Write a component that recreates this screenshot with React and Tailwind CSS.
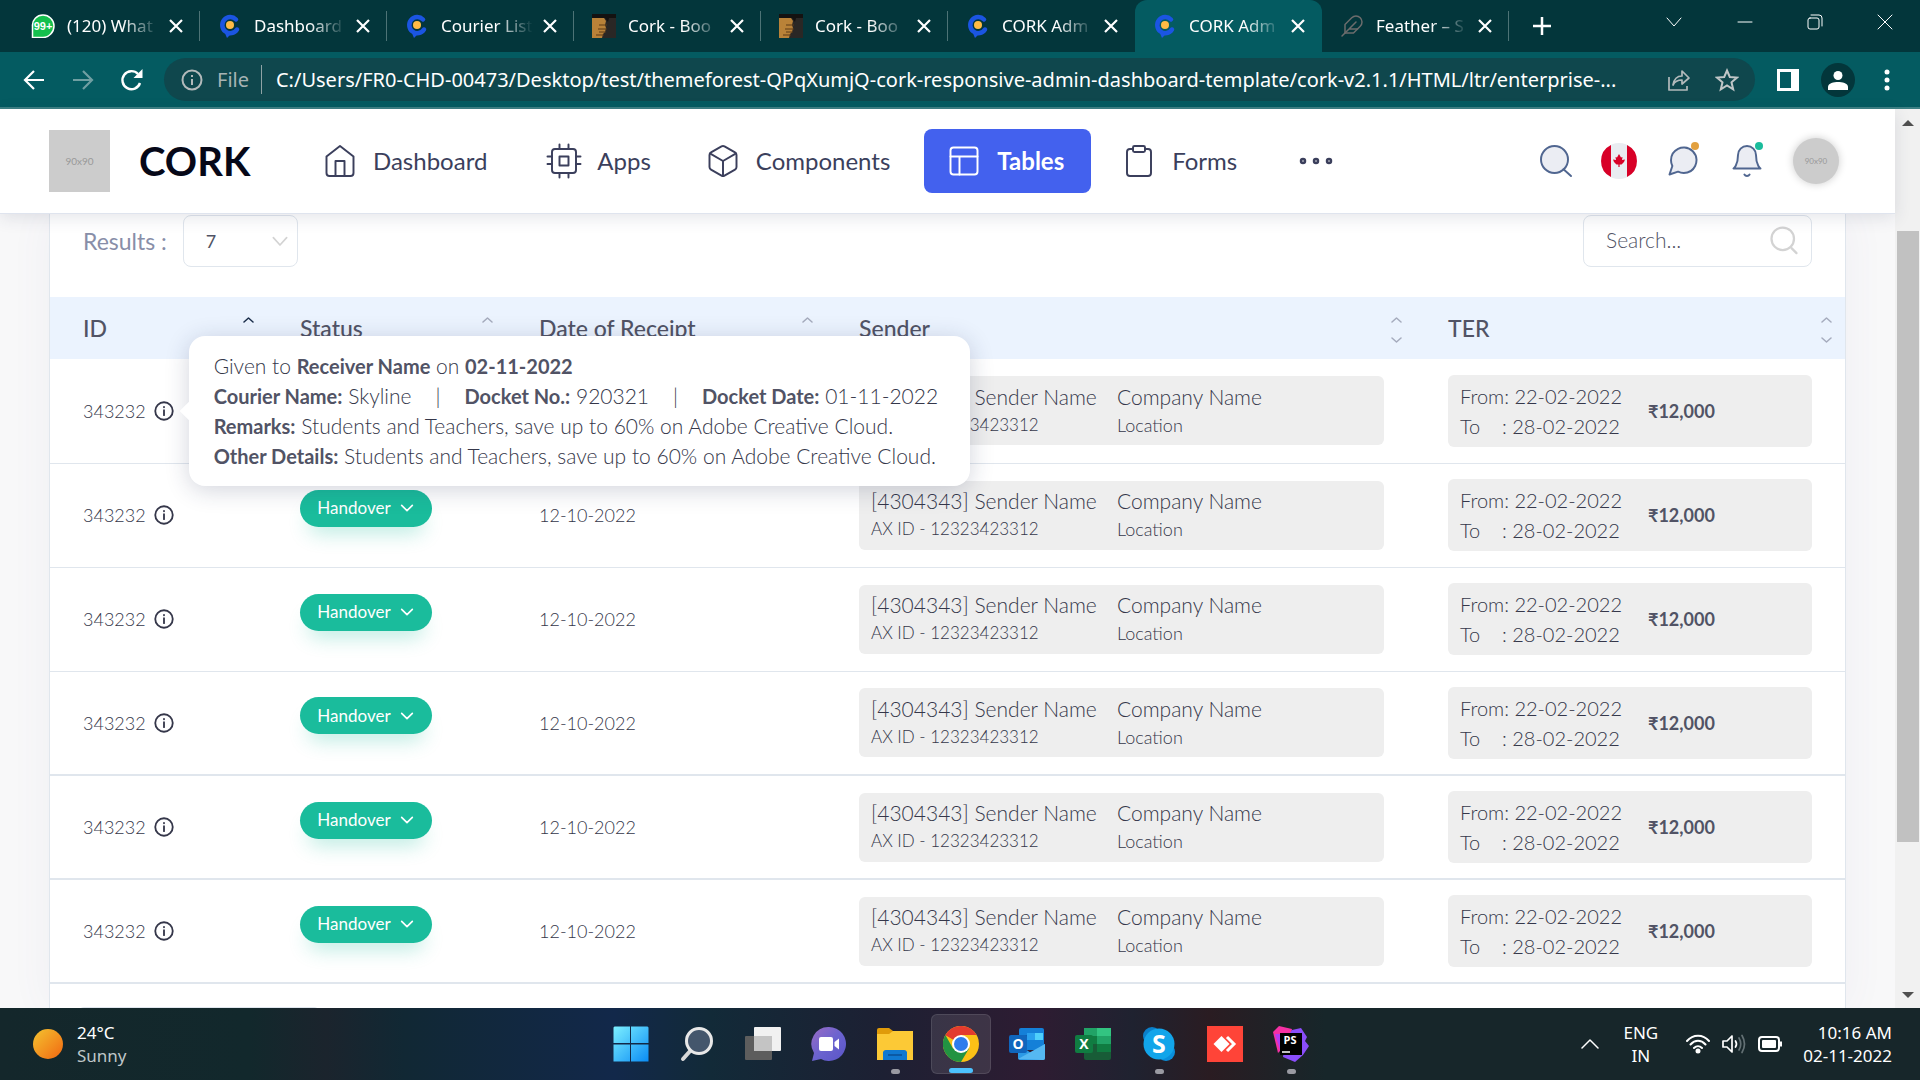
import React from "react";

const stroke = { fill: "none", stroke: "currentColor", strokeLinecap: "round", strokeLinejoin: "round" };

function Icon({ className, width = 1.5, children, fill }) {
  return (
    <svg viewBox="0 0 24 24" className={className} {...stroke} fill={fill || "none"} strokeWidth={width} aria-hidden="true">
      {children}
    </svg>
  );
}

/* ---------- favicons ---------- */

function WhatsAppFavicon() {
  return (
    <svg viewBox="0 0 24 24" className="size-6 shrink-0" aria-hidden="true">
      <path d="M12 1C18 1 23 5.800 23 12S18 23.500 12 23.500H1.500V12C1 5.800 6 1 12 1Z" fill="#14c04d" stroke="#fff" strokeWidth="1.500" />
      <text x="12" y="16" textAnchor="middle" fontSize="11" fontWeight="700" fill="#fff" fontFamily="Liberation Sans, sans-serif">99+</text>
    </svg>
  );
}

function CorkFavicon() {
  return (
    <svg viewBox="0 0 24 24" className="size-6 shrink-0" aria-hidden="true">
      <path d="M18 5.500A8 8 0 1 0 19 15.500" fill="none" stroke="#1b55e2" strokeWidth="4.500" strokeLinecap="round" />
      <path d="M6 17L9 24L15 18Z" fill="#1b55e2" />
      <circle cx="12" cy="11" r="4" fill="#ffbb44" />
    </svg>
  );
}

function EnvatoFavicon() {
  return (
    <svg viewBox="0 0 24 24" className="size-6 shrink-0" aria-hidden="true">
      <rect width="24" height="24" fill="#2a2725" />
      <path d="M0 4L12 4L14 7L13 11L14 14L13 18L11 20L10 24H0Z" fill="#b98238" />
      <path d="M7 11H15M6 15H15M7 18H14M4 21H12" stroke="#5c3a17" strokeWidth="1" />
      <path d="M0 0H24V4H17L16 8L13 4H0Z" fill="#141211" />
    </svg>
  );
}

function FeatherFavicon() {
  return (
    <Icon className="size-6 shrink-0 text-[#6c6c6c]">
      <path d="M20.240 12.240a6 6 0 0 0-8.490-8.490L5 10.500V19h8.500z" />
      <path d="M16 8L2 22M17.500 15H9" />
    </Icon>
  );
}

const TABS = [
  { title: "(120) What", icon: WhatsAppFavicon },
  { title: "Dashboard", icon: CorkFavicon },
  { title: "Courier List", icon: CorkFavicon },
  { title: "Cork - Boo", icon: EnvatoFavicon },
  { title: "Cork - Boo", icon: EnvatoFavicon },
  { title: "CORK Adm", icon: CorkFavicon, beforeActive: true },
  { title: "CORK Adm", icon: CorkFavicon, active: true },
  { title: "Feather – S", icon: FeatherFavicon },
];

function Tab({ title, icon: Fav, active, beforeActive }) {
  return (
    <div className={active ? "relative flex h-full w-[187px] items-center rounded-t-xl bg-[#045b61] pl-[18px]" : "relative flex h-full w-[187px] items-center pl-[18px]"}>
      <Fav />
      <span className="ml-3 w-[92px] overflow-hidden text-[17px] leading-6 whitespace-nowrap text-white [mask-image:linear-gradient(to_right,black_60%,transparent)]">
        {title}
      </span>
      <button aria-label="Close tab" className="ml-[9px] text-white">
        <svg viewBox="0 0 16 16" className="size-4" aria-hidden="true">
          <path d="M2 2L14 14M14 2L2 14" stroke="currentColor" strokeWidth="2.200" />
        </svg>
      </button>
      {!active && !beforeActive && <span className="absolute right-0 h-[30px] w-px bg-[#4d7376]" />}
    </div>
  );
}

function WindowButtons() {
  return (
    <div className="ml-auto flex items-center pb-2 text-white">
      <button aria-label="Search tabs" className="flex w-[72px] justify-center">
        <svg viewBox="0 0 16 10" className="h-[10px] w-4" {...stroke}><path d="M1 1L8 9L15 1" /></svg>
      </button>
      <button aria-label="Minimize" className="flex w-[70px] justify-center">
        <svg viewBox="0 0 16 16" className="size-4" {...stroke}><path d="M1 8H15" /></svg>
      </button>
      <button aria-label="Restore" className="flex w-[70px] justify-center">
        <svg viewBox="0 0 16 16" className="size-4" {...stroke}><rect x="1" y="4" width="11" height="11" rx="2" /><path d="M4 1H12A3 3 0 0 1 15 4V12" /></svg>
      </button>
      <button aria-label="Close window" className="flex w-[70px] justify-center">
        <svg viewBox="0 0 16 16" className="size-4" {...stroke}><path d="M1 1L15 15M15 1L1 15" /></svg>
      </button>
    </div>
  );
}

function BrowserChrome() {
  return (
    <div className="shrink-0 font-['Noto_Sans','Open_Sans',sans-serif]">
      <div className="flex h-[52px] bg-[#03363b] pl-[13px]">
        {TABS.map((t, i) => <Tab key={i} {...t} />)}
        <button aria-label="New tab" className="ml-6 text-white">
          <svg viewBox="0 0 18 18" className="size-[18px]"><path d="M9 0V18M0 9H18" stroke="currentColor" strokeWidth="2.500" /></svg>
        </button>
        <WindowButtons />
      </div>
      <div className="flex h-[57px] items-center border-b-2 border-[#3d8084] bg-[#045b61] pl-[22px] text-white">
        <button aria-label="Back">
          <svg viewBox="0 0 24 24" className="size-6" fill="none" stroke="currentColor" strokeWidth="2.200"><path d="M22 12H3M12 3L3 12L12 21" /></svg>
        </button>
        <button aria-label="Forward" className="ml-[25px] text-[#6f9fa2]">
          <svg viewBox="0 0 24 24" className="size-6" fill="none" stroke="currentColor" strokeWidth="2.200"><path d="M2 12H21M12 3L21 12L12 21" /></svg>
        </button>
        <button aria-label="Reload" className="ml-[25px]">
          <svg viewBox="0 0 24 24" className="size-6"><path d="M20 15A9 9 0 1 1 18 6" fill="none" stroke="currentColor" strokeWidth="2.400" /><path d="M22.500 1V10H13.500Z" fill="currentColor" /></svg>
        </button>
        <div className="ml-5 flex h-[43px] min-w-0 flex-1 items-center rounded-full bg-[#0f474d] pl-[17px] text-xl">
          <svg viewBox="0 0 22 22" className="size-[22px] shrink-0 text-[#b3babb]" fill="none" stroke="currentColor" strokeWidth="2"><circle cx="11" cy="11" r="9.500" /><path d="M11 10V16M11 6V8" /></svg>
          <span className="ml-[14px] text-[#a7b3b4]">File</span>
          <span className="ml-3 h-[29px] w-px bg-[#8fa3a5]" />
          <input aria-label="Address" readOnly className="ml-[14px] min-w-0 flex-1 bg-transparent text-ellipsis outline-none" defaultValue="C:/Users/FR0-CHD-00473/Desktop/test/themeforest-QPqXumjQ-cork-responsive-admin-dashboard-template/cork-v2.1.1/HTML/ltr/enterprise-..." />
          <button aria-label="Share" className="ml-2 text-[#b3babb]">
            <svg viewBox="0 0 24 24" className="size-6" fill="none" stroke="currentColor" strokeWidth="1.700" strokeLinejoin="round"><path d="M2 9V22H20V18M6 17C7 11 10 8 15 8V3L22 10L15 16V12C11 12 8 13 6 17Z" /></svg>
          </button>
          <button aria-label="Bookmark" className="mr-4 ml-6 text-[#c0c6c7]">
            <svg viewBox="0 0 24 24" className="size-6" fill="none" stroke="currentColor" strokeWidth="2"><path d="M12 2.500L14.800 9L22 9.600L16.500 14.300L18.200 21.300L12 17.500L5.800 21.300L7.500 14.300L2 9.600L9.200 9Z" /></svg>
          </button>
        </div>
        <button aria-label="Side panel" className="ml-[22px]">
          <svg viewBox="0 0 22 22" className="size-[22px]"><path d="M0 0H22V22H0ZM3 3V19H14V3Z" fill="currentColor" fillRule="evenodd" /></svg>
        </button>
        <button aria-label="Profile" className="ml-[22px] flex size-[34px] items-center justify-center rounded-full bg-[#03363b]">
          <svg viewBox="0 0 20 20" className="size-5" fill="currentColor"><circle cx="10" cy="5.500" r="4.500" /><path d="M0 20V17C0 13 6 12 10 12S20 13 20 17V20Z" /></svg>
        </button>
        <button aria-label="Menu" className="mr-[30px] ml-[29px]">
          <svg viewBox="0 0 6 22" className="h-[22px] w-[6px]" fill="currentColor"><circle cx="3" cy="3" r="2.500" /><circle cx="3" cy="11" r="2.500" /><circle cx="3" cy="19" r="2.500" /></svg>
        </button>
      </div>
    </div>
  );
}

/* ---------- application header ---------- */

const NAV = [
  { label: "Dashboard", path: <><path d="M3 9l9-7 9 7v11a2 2 0 0 1-2 2H5a2 2 0 0 1-2-2z" /><path d="M9 22V12H15V22" /></>, cls: "ml-[65px]" },
  { label: "Apps", path: <><rect x="4" y="4" width="16" height="16" rx="2" /><rect x="9" y="9" width="6" height="6" /><path d="M9 1V4M15 1V4M9 20V23M15 20V23M20 9H23M20 14H23M1 9H4M1 14H4" /></>, cls: "ml-[59px]" },
  { label: "Components", path: <><path d="M21 16V8a2 2 0 0 0-1-1.730l-7-4a2 2 0 0 0-2 0l-7 4A2 2 0 0 0 3 8v8a2 2 0 0 0 1 1.730l7 4a2 2 0 0 0 2 0l7-4A2 2 0 0 0 21 16z" /><path d="M3.270 6.960L12 12.010L20.730 6.960M12 22.080V12" /></>, cls: "ml-[54px]" },
  { label: "Tables", path: <><rect x="3" y="3" width="18" height="18" rx="2" /><path d="M3 9H21M9 21V9" /></>, active: true },
  { label: "Forms", path: <><path d="M16 4h2a2 2 0 0 1 2 2v14a2 2 0 0 1-2 2H6a2 2 0 0 1-2-2V6a2 2 0 0 1 2-2h2" /><rect x="8" y="2" width="8" height="4" rx="1" /></>, cls: "ml-[30px]" },
];

function CanadaFlag() {
  return (
    <svg viewBox="0 0 36 36" className="size-9" aria-hidden="true">
      <circle cx="18" cy="18" r="18" fill="#e9ecf1" />
      <path d="M10 1.900A18 18 0 0 0 10 34.100ZM26 1.900A18 18 0 0 1 26 34.100Z" fill="#d80027" />
      <path d="M18 11L20 14.500L21.500 14L21 17L24 16.500L23 19L20.500 21.500H18.600V24H17.400V21.500H15.500L13 19L12 16.500L15 17L14.500 14L16 14.500Z" fill="#d80027" />
    </svg>
  );
}

function AppHeader() {
  return (
    <header className="relative z-30 flex h-[105px] shrink-0 items-center border-b border-[#dfe4ee] bg-white pr-14 pl-[49px] text-[#3b3f5c] shadow-[0_4px_16px_rgba(40,50,80,0.12)]">
      <div className="flex h-[62px] w-[61px] items-center justify-center bg-[#cccccc] text-[10px] text-[#999]">90x90</div>
      <a href="#" className="ml-[29px] w-[118px] text-[40px] leading-none font-bold text-[#060818]">CORK</a>
      <nav className="flex items-center text-2xl">
        {NAV.map((n) => (
          <a
            key={n.label}
            href="#"
            className={n.active
              ? "ml-[34px] flex h-16 items-center rounded-lg bg-[#4361ee] pr-[27px] pl-[22px] font-bold text-white"
              : `flex items-center ${n.cls}`}
          >
            <Icon className="size-9" width={1.3}>{n.path}</Icon>
            <span className="ml-[15px]">{n.label}</span>
          </a>
        ))}
        <button aria-label="More" className="ml-[61px]">
          <svg viewBox="0 0 36 10" className="h-[10px] w-9" fill="none" stroke="currentColor" strokeWidth="2.500"><circle cx="5" cy="5" r="2" /><circle cx="18" cy="5" r="2" /><circle cx="31" cy="5" r="2" /></svg>
        </button>
      </nav>
      <div className="ml-auto flex items-center text-[#506690]">
        <button aria-label="Search">
          <Icon className="size-9" fill="#ebedf3" width={1.3}><circle cx="11" cy="11" r="9" /><path d="M17 17.500L22 22" /></Icon>
        </button>
        <button aria-label="Language" className="ml-[27px]"><CanadaFlag /></button>
        <button aria-label="Messages" className="relative ml-7">
          <Icon className="size-9" fill="#ebedf3" width={1.3}><path d="M21 11.500a8.380 8.380 0 0 1-.9 3.800 8.500 8.500 0 0 1-7.600 4.700 8.380 8.380 0 0 1-3.800-.9L3 21l1.900-5.700a8.380 8.380 0 0 1-.9-3.800 8.500 8.500 0 0 1 4.700-7.600 8.380 8.380 0 0 1 3.800-.9h.5a8.480 8.480 0 0 1 8 8v.5z" /></Icon>
          <span className="absolute -top-px right-[2px] size-2 rounded-full bg-[#e2a03f]" />
        </button>
        <button aria-label="Notifications" className="relative ml-7">
          <Icon className="size-9" fill="#ebedf3" width={1.3}><path d="M18 8A6 6 0 0 0 6 8c0 7-3 9-3 9h18s-3-2-3-9" /><path d="M13.730 21a2 2 0 0 1-3.460 0" /></Icon>
          <span className="absolute -top-px right-[2px] size-2 rounded-full bg-[#1abc9c]" />
        </button>
        <button aria-label="Account" className="ml-7 flex size-[46px] items-center justify-center rounded-full bg-[#cccccc] text-[8px] text-[#999] shadow-[0_0_8px_rgba(0,0,0,0.2)]">90x90</button>
      </div>
    </header>
  );
}

/* ---------- table ---------- */

function Sort({ up }) {
  return (
    <span className="absolute top-5 right-[13px] flex flex-col gap-[14px] text-[#a5abbd]">
      <svg viewBox="0 0 11 6" className={up ? "h-[6px] w-[11px] text-[#1b2e4b]" : "h-[6px] w-[11px]"} {...stroke} strokeWidth="1.500"><path d="M1 5L5.500 1L10 5" /></svg>
      <svg viewBox="0 0 11 6" className="h-[6px] w-[11px]" {...stroke} strokeWidth="1.500"><path d="M1 1L5.500 5L10 1" /></svg>
    </span>
  );
}

function Strong({ children }) {
  return <b className="text-xl leading-[30px] font-bold text-[#515365]">{children}</b>;
}

function Tooltip() {
  return (
    <div role="tooltip" className="absolute top-1/2 left-full z-20 ml-[15px] w-[781px] -translate-y-1/2 rounded-2xl bg-white px-[25px] py-[15px] text-[21px] leading-[30px] font-light whitespace-nowrap shadow-[0_4px_24px_rgba(30,40,80,0.2)]">
      <span className="absolute top-1/2 -left-[6px] size-4 -translate-y-1/2 rotate-45 bg-white" />
      <p>Given to <Strong>Receiver Name</Strong> on <Strong>02-11-2022</Strong></p>
      <p className="flex">
        <span><Strong>Courier Name:</Strong> Skyline</span>
        <span className="w-[53px] text-center">|</span>
        <span><Strong>Docket No.:</Strong> 920321</span>
        <span className="w-[53px] text-center">|</span>
        <span><Strong>Docket Date:</Strong> 01-11-2022</span>
      </p>
      <p><Strong>Remarks:</Strong> Students and Teachers, save up to 60% on Adobe Creative Cloud.</p>
      <p><Strong>Other Details:</Strong> Students and Teachers, save up to 60% on Adobe Creative Cloud.</p>
    </div>
  );
}

function Row({ first, heavy }) {
  return (
    <tr className={heavy ? "h-[104px] border-b-2 border-[#e0e6ed]" : "h-[104px] border-b border-[#e0e6ed]"}>
      <td className="pl-[33px]">
        <div className="flex items-center">
          <span className="text-lg">343232</span>
          <span className="relative ml-2 flex">
            <button aria-label="Details">
              <Icon className="size-5" width={2.2}><circle cx="12" cy="12" r="10.500" /><path d="M12 11V17M12 7V7.500" /></Icon>
            </button>
            {first && <Tooltip />}
          </span>
        </div>
      </td>
      <td className="pb-[14px] pl-[33px]">
        <button className="flex h-[37px] w-[132px] items-center justify-center gap-2 rounded-full bg-[#1abc9c] text-[17px] font-normal text-white shadow-[0_14px_20px_-8px_rgba(26,188,156,0.3)]">
          Handover
          <Icon className="size-4" width={2.5}><path d="M4 8L12 16L20 8" /></Icon>
        </button>
      </td>
      <td className="pl-[33px] text-lg">12-10-2022</td>
      <td className="pr-[31px] pl-[33px]">
        <div className="grid h-[69px] grid-cols-[246px_1fr] content-center rounded-md bg-[#eeeeee] px-3 leading-7">
          <span className="text-[21px]">[4304343] Sender Name</span>
          <span className="text-[21px]">Company Name</span>
          <span className="text-[17px]">AX ID - 12323423312</span>
          <span className="text-lg leading-7">Location</span>
        </div>
      </td>
      <td className="px-[33px]">
        <div className="flex h-[72px] items-center rounded-md bg-[#eeeeee] pl-3 text-xl leading-[30px]">
          <div className="w-[188px]">
            <p>From: 22-02-2022</p>
            <p className="whitespace-pre">{"To    : 28-02-2022"}</p>
          </div>
          <b className="text-lg font-bold text-[#515365]">₹12,000</b>
        </div>
      </td>
    </tr>
  );
}

const COLUMNS = [
  { label: "ID", cls: "w-[217px]", up: true },
  { label: "Status", cls: "w-[239px]" },
  { label: "Date of Receipt", cls: "w-[320px]" },
  { label: "Sender", cls: "" },
  { label: "TER", cls: "w-[430px]" },
];

function Page() {
  return (
    <main className="min-h-0 flex-1 overflow-hidden bg-[#f8f8f9] pr-[49px] pl-[49px] text-[#515365]">
      <div className="h-full border-x border-[#e0e6ed] bg-white shadow-[0_0_40px_rgba(94,92,154,0.06)]">
        <div className="flex h-[83px] items-start justify-between px-[33px] pt-px">
          <label className="flex items-center text-[23px] text-[#888ea8]">
            Results :
            <span className="relative ml-4">
              <select defaultValue="7" className="h-[52px] w-[115px] appearance-none rounded-lg border border-[#e0e6ed] bg-white pl-[22px] text-lg text-[#515365]">
                <option>7</option>
              </select>
              <Icon className="pointer-events-none absolute top-[18px] right-[10px] size-4 text-[#d3d3d3]" width={2.5}><path d="M2 7L12 18L22 7" /></Icon>
            </span>
          </label>
          <label className="relative">
            <input aria-label="Search" placeholder="Search..." className="h-[52px] w-[229px] rounded-lg border border-[#e0e6ed] pb-1 pl-[22px] text-[21px] placeholder:font-light placeholder:text-[#515365]" />
            <Icon className="absolute top-[10px] right-[13px] size-[30px] text-[#d3d3d3]" width={1.8}><circle cx="11" cy="11" r="9" /><path d="M18 18.500L22 22.500" /></Icon>
          </label>
        </div>
        <table className="w-full table-fixed border-collapse text-left">
          <thead className="bg-[#ebf3fe]">
            <tr className="h-[62px]">
              {COLUMNS.map((c) => (
                <th key={c.label} className={`relative pl-[33px] text-[23px] font-medium ${c.cls}`}>
                  {c.label}
                  <Sort up={c.up} />
                </th>
              ))}
            </tr>
          </thead>
          <tbody className="font-light text-[#35374a]">
            {[0, 1, 2, 3, 4, 5].map((i) => <Row key={i} first={i === 0} heavy={i > 2} />)}
          </tbody>
        </table>
        <div className="mt-[23px] ml-7 h-12 w-[242px] rounded-md border border-[#e0e6ed]" />
      </div>
    </main>
  );
}

function Scrollbar() {
  return (
    <div className="flex w-[25px] shrink-0 flex-col items-center bg-[#f1f1f1] text-[#505050]">
      <svg viewBox="0 0 12 6" className="mt-[11px] h-[6px] w-3" fill="currentColor"><path d="M0 6L6 0L12 6Z" /></svg>
      <div className="mt-[105px] h-[611px] w-[22px] bg-[#c1c1c1]" />
      <svg viewBox="0 0 12 6" className="mt-auto mb-[10px] h-[6px] w-3" fill="currentColor"><path d="M0 0L6 6L12 0Z" /></svg>
    </div>
  );
}

/* ---------- taskbar ---------- */

const APPS = [
  { name: "Start", art: <><defs><linearGradient id="win" x1="0" y1="0" x2="1" y2="1"><stop offset="0" stopColor="#7df0ff" /><stop offset="1" stopColor="#0a8cf5" /></linearGradient></defs><path d="M1.500 .5H17V17H.5V1.500ZM18 .5H34.500L35.500 1.500V17H18ZM.5 18.500H17V35.500H.5ZM18 18.500H35.500V35.500H18Z" fill="url(#win)" /></> },
  { name: "Search", art: <><path d="M4 33L12 24" stroke="#d8d8d8" strokeWidth="4" strokeLinecap="round" /><circle cx="20" cy="15" r="12.500" fill="#44566c" stroke="#e8e8e8" strokeWidth="3" /></> },
  { name: "Task view", art: <><rect x="0" y="10" width="27" height="24" rx="1" fill="#5d5d5d" /><rect x="9" y="1" width="27" height="24" rx="1" fill="#f1f1f1" /><rect x="9" y="10" width="18" height="15" fill="#c4c4c4" /></> },
  { name: "Chat", art: <><defs><linearGradient id="chat" x1="0" y1="0" x2="1" y2="1"><stop offset="0" stopColor="#9a6bc4" /><stop offset=".5" stopColor="#6b63cf" /><stop offset="1" stopColor="#5a55c8" /></linearGradient></defs><path d="M18 1A17 17 0 1 1 10 33L1 35L3 27A17 17 0 0 1 18 1Z" fill="url(#chat)" /><rect x="8" y="11" width="14" height="14" rx="2" fill="#fff" /><path d="M23.500 16L28 12.500V23.500L23.500 20Z" fill="#fff" /></> },
  { name: "Explorer", mark: "w-[9px] bg-[#9a9aa2]", art: <><path d="M0 4A2 2 0 0 1 2 2H12L16 5V9H0Z" fill="#e09b0a" /><path d="M0 8H12L16 5H36V34H0Z" fill="#fcc936" /><path d="M6 34V26A3 3 0 0 1 9 24H27A3 3 0 0 1 30 26V34Z" fill="#1078d0" /><path d="M11 29H25" stroke="#0a4f96" strokeWidth="1.500" /></> },
  { name: "Chrome", active: true, mark: "w-6 bg-[#4cc2ff]", art: <><circle cx="18" cy="18" r="18" fill="#fbc116" /><path d="M18 18L2.400 9A18 18 0 0 1 33.600 9H18Z" fill="#e33b2e" /><path d="M2.400 9A18 18 0 0 0 18 36L26 22.500L10 22.500Z" fill="#229342" /><path d="M10.200 13.500L2.400 9L18 9Z" fill="#e33b2e" /><circle cx="18" cy="18" r="9" fill="#fff" /><circle cx="18" cy="18" r="7" fill="#2f7cec" /></> },
  { name: "Outlook", art: <><rect x="10" y="2" width="25" height="22" rx="2" fill="#1480d8" /><path d="M10 9H18V18H10Z" fill="#0c5cab" /><path d="M18 7H26V14H18Z" fill="#29a0ee" /><path d="M26 7H34V14H26Z" fill="#4fd0fb" /><path d="M9 18L22 27L36 18V32A2 2 0 0 1 34 34H11A2 2 0 0 1 9 32Z" fill="#2c9ae6" /><path d="M9 33L36 18V32A2 2 0 0 1 34 34Z" fill="#55b8f2" /><rect x="0" y="9" width="18" height="18" rx="2" fill="#1066bd" /><text x="9" y="23" textAnchor="middle" fontSize="14" fontWeight="700" fill="#fff">O</text></> },
  { name: "Excel", art: <><rect x="9" y="2" width="27" height="32" rx="2" fill="#185c37" /><path d="M9 2H22V10H9Z" fill="#21a366" /><path d="M22 2H36V10H22Z" fill="#33c481" /><path d="M9 10H22V18H9Z" fill="#107c41" /><path d="M22 10H36V18H22Z" fill="#21a366" /><path d="M22 18H36V26H22Z" fill="#107c41" /><rect x="0" y="9" width="18" height="18" rx="2" fill="#107c41" /><text x="9" y="23" textAnchor="middle" fontSize="14" fontWeight="700" fill="#fff">X</text></> },
  { name: "Skype", mark: "w-[9px] bg-[#9a9aa2]", art: <><circle cx="11" cy="10" r="9" fill="#0b7fc9" /><circle cx="25" cy="26" r="9" fill="#0a8fdc" /><circle cx="18" cy="18" r="15.500" fill="#12a5ea" /><text x="18" y="27" textAnchor="middle" fontSize="25" fontWeight="700" fill="#fff">S</text></> },
  { name: "AnyDesk", art: <><rect width="36" height="36" fill="#ff4438" /><path d="M14.500 10L22.500 18L14.500 26L6.500 18Z" fill="#fff" /><path d="M20 11L27 18L20 25" fill="none" stroke="#fff" strokeWidth="3" /></> },
  { name: "PhpStorm", mark: "w-[9px] bg-[#9a9aa2]", art: <><path d="M0 6L6 0L19 3L17 15L5 27Z" fill="#f530a4" /><path d="M19 4L28 2L34 11L32 15L36 20L30 29L22 36L10 31L12 15Z" fill="#8a4dfa" /><path d="M2 8L8 27H14L10 8Z" fill="#b43bf0" /><rect x="7" y="7" width="22" height="22" fill="#000" /><text x="17" y="18" textAnchor="middle" fontSize="11" fontWeight="700" fill="#fff">PS</text><path d="M9 26H17" stroke="#fff" strokeWidth="1.500" /></> },
];

function Taskbar() {
  return (
    <footer className="grid h-[72px] shrink-0 grid-cols-[1fr_auto_1fr] items-center bg-[linear-gradient(to_right,#14272b_0%,#12282c_13%,#1b242d_17%,#112834_21%,#12284a_32%,#122a38_37%,#1d2033_46%,#2e1c32_54%,#1f2230_59%,#2a1c22_63%,#17262a_69%,#17262a_100%)] font-['Noto_Sans','Open_Sans',sans-serif] text-[17px] leading-[23px] text-white">
      <div className="flex items-center pl-[33px]">
        <span className="size-[30px] rounded-full bg-linear-to-br from-[#f2c230] to-[#ef6510]" />
        <div className="ml-[14px]">
          <p>24°C</p>
          <p className="text-[#bfc6c8]">Sunny</p>
        </div>
      </div>
      <div className="flex gap-[6px] pl-[2px]">
        {APPS.map((a) => (
          <button key={a.name} aria-label={a.name} className={a.active ? "relative flex size-[60px] items-center justify-center rounded-md border border-white/10 bg-white/10" : "relative flex size-[60px] items-center justify-center"}>
            <svg viewBox="0 0 36 36" className="size-9" fontFamily="Open Sans, sans-serif" aria-hidden="true">{a.art}</svg>
            {a.mark && <span className={`absolute bottom-0 h-[5px] rounded-full ${a.mark}`} />}
          </button>
        ))}
      </div>
      <div className="flex items-center justify-end pr-7">
        <button aria-label="Hidden icons">
          <svg viewBox="0 0 18 10" className="h-[10px] w-[18px]" {...stroke} strokeWidth="1.500"><path d="M1 9L9 1L17 9" /></svg>
        </button>
        <div className="ml-[25px] text-center"><p>ENG</p><p>IN</p></div>
        <svg viewBox="0 0 24 20" className="ml-7 h-5 w-6" {...stroke} strokeWidth="2"><path d="M1 7C7 0 17 0 23 7M4.500 10.500C9 5.500 15 5.500 19.500 10.500M8 14C10.500 11.500 13.500 11.500 16 14" /><circle cx="12" cy="17" r="1.500" fill="currentColor" /></svg>
        <svg viewBox="0 0 24 20" className="ml-3 h-5 w-6" {...stroke} strokeWidth="1.700"><path d="M1 7H5L10 2V18L5 13H1Z" /><path d="M13.500 7Q15.500 10 13.500 13" /><path d="M17 4Q20.500 10 17 16M20 1.500Q25 10 20 18.500" stroke="#637074" /></svg>
        <svg viewBox="0 0 24 16" className="ml-3 h-4 w-6" fill="none" stroke="currentColor" strokeWidth="2"><rect x="1" y="1" width="20" height="14" rx="3" /><rect x="4" y="4" width="14" height="8" rx="1" fill="currentColor" stroke="none" /><path d="M23 5.500V10.500" /></svg>
        <div className="ml-[21px] text-right"><p>10:16 AM</p><p>02-11-2022</p></div>
      </div>
    </footer>
  );
}

export default function App() {
  return (
    <div className="flex h-screen flex-col overflow-hidden font-['Lato','Noto_Sans',sans-serif]">
      <BrowserChrome />
      <div className="flex min-h-0 flex-1">
        <div className="flex min-w-0 flex-1 flex-col">
          <AppHeader />
          <Page />
        </div>
        <Scrollbar />
      </div>
      <Taskbar />
    </div>
  );
}
